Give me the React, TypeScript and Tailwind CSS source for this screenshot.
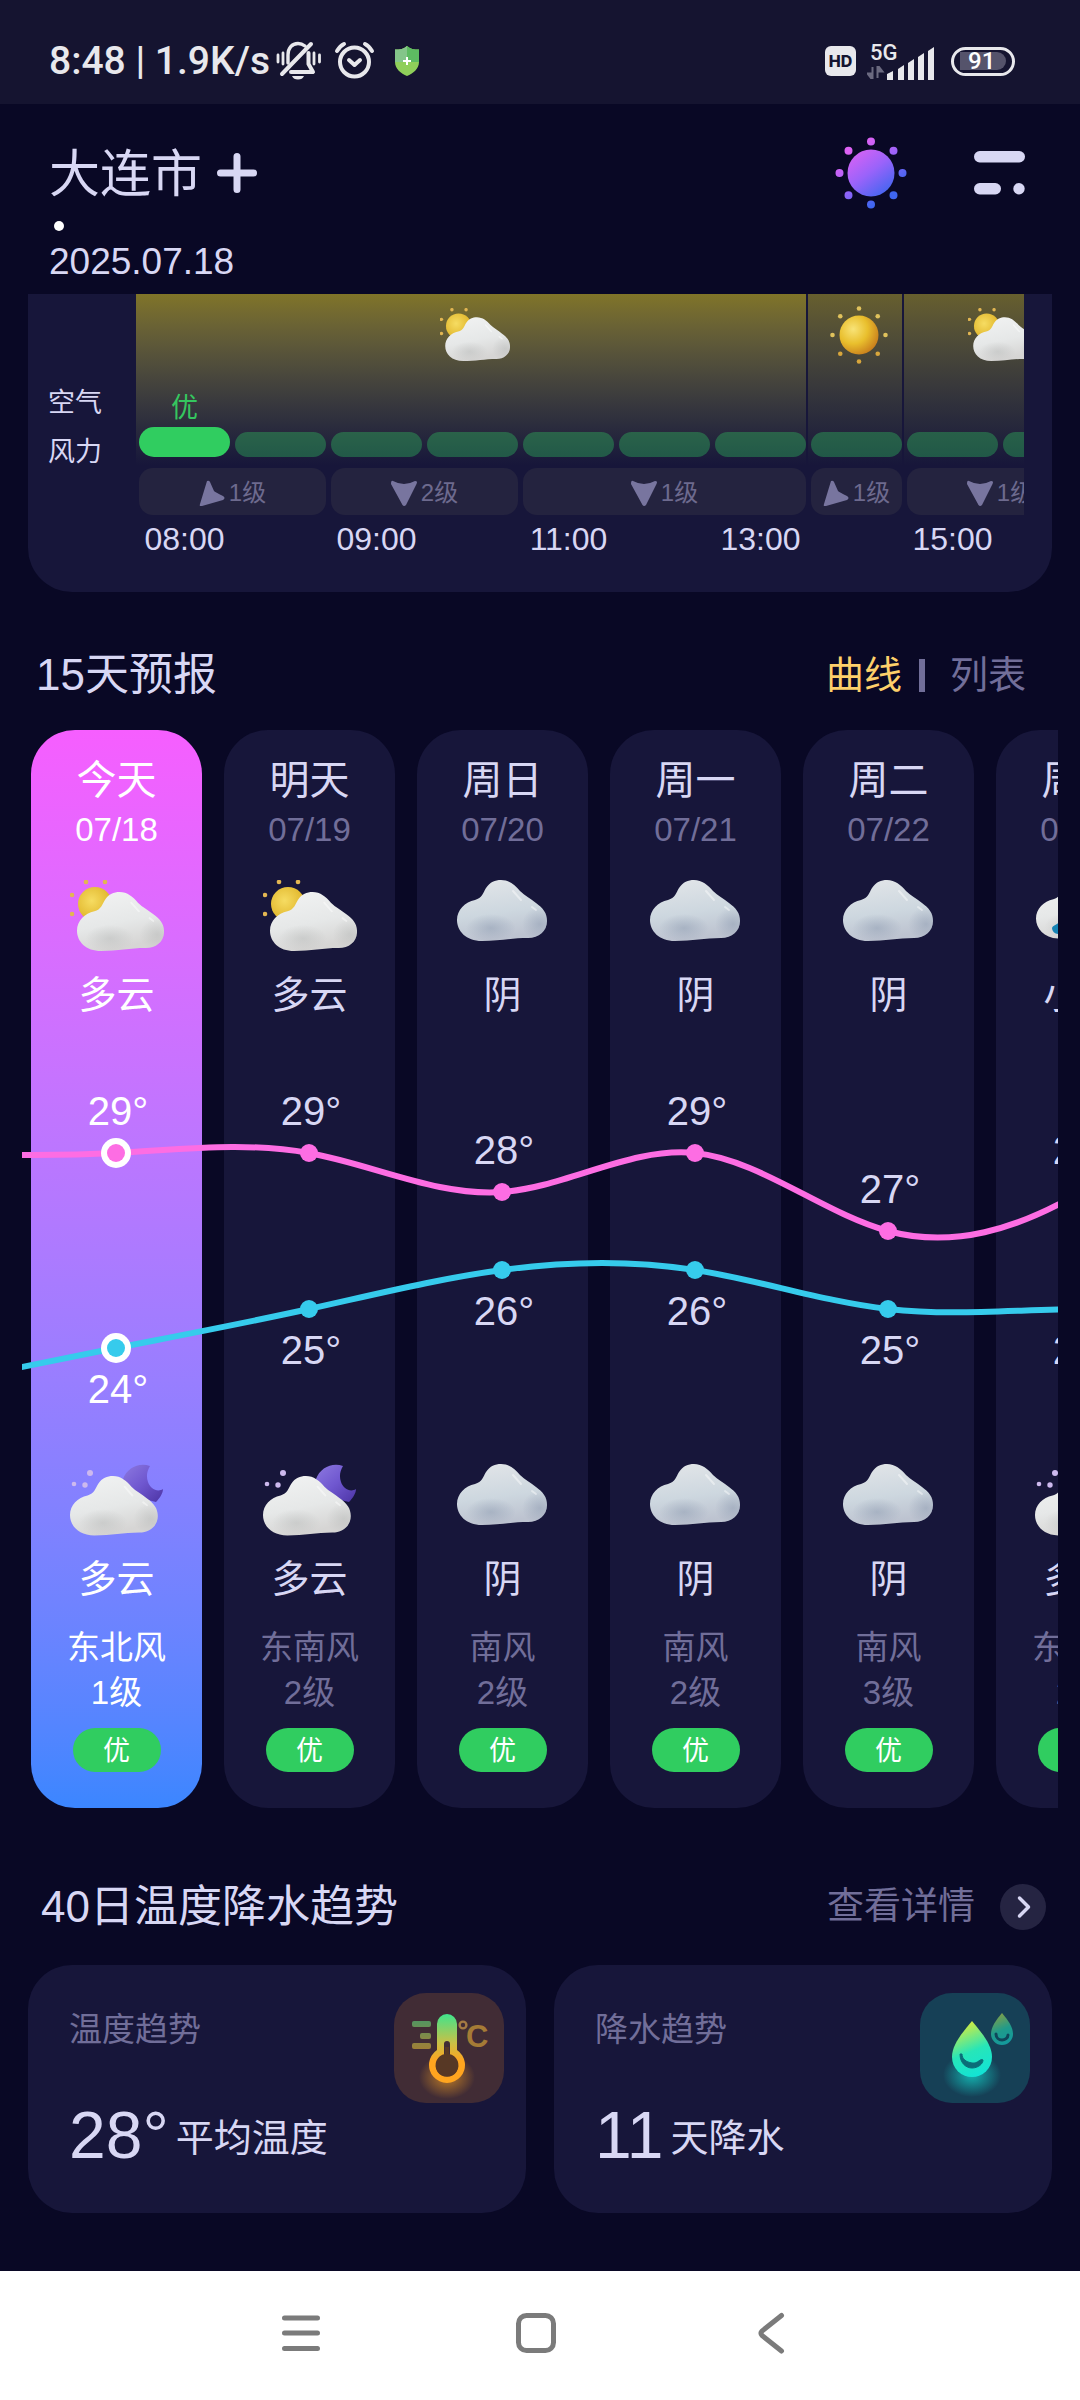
type Sky = "cloudy" | "cloudyNight" | "overcast" | "rain" | "sunny";

const HOUR_WIDTH = 96;
const DAY_WIDTH = 193;
const DEGREE_HEIGHT = 39;

const skySegments: { sky: Sky; hours: number; strong?: boolean; current?: boolean }[] = [
  { sky: "cloudy", hours: 7, strong: true, current: true },
  { sky: "sunny", hours: 1 },
  { sky: "cloudy", hours: 2 },
];

const windSegments = [
  { hours: 2, level: "1级", northEast: true },
  { hours: 2, level: "2级" },
  { hours: 3, level: "1级" },
  { hours: 1, level: "1级", northEast: true },
  { hours: 2, level: "1级" },
];

const hourLabels = ["08:00", "09:00", "11:00", "13:00", "15:00"];

const days: {
  name: string;
  date: string;
  day: Sky;
  dayText: string;
  night: Sky;
  nightText: string;
  high: number;
  low: number;
  wind: string;
  level: string;
}[] = [
  { name: "今天", date: "07/18", day: "cloudy", dayText: "多云", night: "cloudyNight", nightText: "多云", high: 29, low: 24, wind: "东北风", level: "1级" },
  { name: "明天", date: "07/19", day: "cloudy", dayText: "多云", night: "cloudyNight", nightText: "多云", high: 29, low: 25, wind: "东南风", level: "2级" },
  { name: "周日", date: "07/20", day: "overcast", dayText: "阴", night: "overcast", nightText: "阴", high: 28, low: 26, wind: "南风", level: "2级" },
  { name: "周一", date: "07/21", day: "overcast", dayText: "阴", night: "overcast", nightText: "阴", high: 29, low: 26, wind: "南风", level: "2级" },
  { name: "周二", date: "07/22", day: "overcast", dayText: "阴", night: "overcast", nightText: "阴", high: 27, low: 25, wind: "南风", level: "3级" },
  { name: "周三", date: "07/23", day: "rain", dayText: "小雨", night: "cloudyNight", nightText: "多云", high: 28, low: 25, wind: "东南风", level: "2级" },
];

// yesterday first, then the visible days, then two more so the line runs on
const highs = [29, ...days.map((d) => d.high), 31, 31];
const lows = [23, ...days.map((d) => d.low), 25, 26];

const dayX = (i: number) => 94 + i * DAY_WIDTH;
const tempY = (t: number) => 83 + (29 - t) * DEGREE_HEIGHT;

// natural cubic spline through equally spaced temperatures
function splinePath(temps: number[]) {
  const y = temps.map(tempY);
  const n = y.length;
  const slope = y.map(() => 0);
  for (let pass = 0; pass < 30; pass++) {
    slope[0] = (3 * (y[1] - y[0]) - slope[1]) / 2;
    for (let i = 1; i < n - 1; i++) {
      slope[i] = (3 * (y[i + 1] - y[i - 1]) - slope[i - 1] - slope[i + 1]) / 4;
    }
    slope[n - 1] = (3 * (y[n - 1] - y[n - 2]) - slope[n - 2]) / 2;
  }
  const third = DAY_WIDTH / 3;
  let path = `M${dayX(-1)} ${y[0]}`;
  for (let i = 1; i < n; i++) {
    const x0 = dayX(i - 2);
    const x1 = dayX(i - 1);
    path += ` C${x0 + third} ${y[i - 1] + slope[i - 1] / 3} ${x1 - third} ${y[i] - slope[i] / 3} ${x1} ${y[i]}`;
  }
  return path;
}

const CLOUD =
  "M25 61C9 61 0 51 0 40C0 30 8 22 18 20C25 18 26 13 29 8C33 2 38 0 44 0C52 0 58 5 63 11C68 16 73 18 79 23C86 28 90 33 90 41C90 51 82 58 71 58C55 58 42 61 25 61Z";

function SharedDefs() {
  return (
    <svg className="absolute h-0 w-0" aria-hidden="true">
      <defs>
        <linearGradient id="cloudWhite" x1="0" y1="0" x2="0.3" y2="1">
          <stop offset="0" stopColor="#f2f3f3" />
          <stop offset="0.6" stopColor="#e6e8e8" />
          <stop offset="1" stopColor="#d6d5d4" />
        </linearGradient>
        <linearGradient id="cloudGray" x1="0" y1="0" x2="0.2" y2="1">
          <stop offset="0" stopColor="#e3e6e9" />
          <stop offset="0.6" stopColor="#cdd7df" />
          <stop offset="1" stopColor="#bdc3d0" />
        </linearGradient>
        <radialGradient id="shadeWhite">
          <stop offset="0" stopColor="#b0b3b2" stopOpacity="0.4" />
          <stop offset="1" stopColor="#b0b3b2" stopOpacity="0" />
        </radialGradient>
        <radialGradient id="shadeGray">
          <stop offset="0" stopColor="#8c9ab0" stopOpacity="0.5" />
          <stop offset="1" stopColor="#8c9ab0" stopOpacity="0" />
        </radialGradient>
        <radialGradient id="sunBall" cx="0.35" cy="0.35" r="0.75">
          <stop offset="0" stopColor="#f8e377" />
          <stop offset="0.5" stopColor="#e9bf2d" />
          <stop offset="1" stopColor="#c4761a" />
        </radialGradient>
        <radialGradient id="sunSmall" cx="0.4" cy="0.4" r="0.7">
          <stop offset="0" stopColor="#f6dc62" />
          <stop offset="1" stopColor="#dcae20" />
        </radialGradient>
        <linearGradient id="moon" x1="0" y1="0" x2="1" y2="1">
          <stop offset="0" stopColor="#8d79e0" />
          <stop offset="0.5" stopColor="#6f57cf" />
          <stop offset="1" stopColor="#4c34a5" />
        </linearGradient>
        <clipPath id="cloudClip">
          <path d={CLOUD} />
        </clipPath>
      </defs>
    </svg>
  );
}

function Cloud({ gray }: { gray?: boolean }) {
  const shade = gray ? "url(#shadeGray)" : "url(#shadeWhite)";
  return (
    <g>
      <path d={CLOUD} fill={gray ? "url(#cloudGray)" : "url(#cloudWhite)"} />
      <g clipPath="url(#cloudClip)">
        <ellipse cx="34" cy="48" rx="25" ry="14" fill={shade} />
        <ellipse cx="83" cy="44" rx="18" ry="17" fill={shade} />
      </g>
      <path d="M56 11L64 20M75 27L79 30" stroke="#fff" strokeWidth="2" strokeLinecap="round" opacity="0.45" />
    </g>
  );
}

function SkyIcon({ sky, small }: { sky: Sky; small?: boolean }) {
  const size = small ? "h-[54px] w-[70px] shrink-0" : "h-[72px] w-[94px] shrink-0";
  if (sky === "sunny") {
    const rays = [0, 45, 90, 135, 180, 225, 270, 315];
    return (
      <svg className="h-[62px] w-[62px] shrink-0" viewBox="0 0 62 62" aria-label="晴">
        <circle cx="31" cy="31" r="19.500" fill="url(#sunBall)" />
        {rays.map((a) => (
          <circle
            key={a}
            cx={31 + 26.5 * Math.cos((a * Math.PI) / 180)}
            cy={31 + 26.5 * Math.sin((a * Math.PI) / 180)}
            r="2.3"
            fill={a > 0 && a < 180 ? "#d8a63c" : "#e0c25c"}
          />
        ))}
      </svg>
    );
  }
  if (sky === "cloudy") {
    return (
      <svg className={size} viewBox="0 0 94 72" aria-label="多云">
        <circle cx="25" cy="24" r="17" fill="url(#sunSmall)" />
        {[[16, 2], [35, 2], [2, 15], [2, 34]].map(([x, y]) => (
          <circle key={`${x}-${y}`} cx={x} cy={y} r="2.3" fill="#e2b652" />
        ))}
        <g transform="translate(7 12) scale(.967)">
          <Cloud />
        </g>
      </svg>
    );
  }
  if (sky === "cloudyNight") {
    return (
      <svg className={size} viewBox="0 0 94 72" aria-label="多云">
        <path
          d="M80 2C69 -2 57 4 53 15L53 30L86 38C90 34 93 29 93 25C87 29 80 24 78 18C76 12 77 7 80 2Z"
          fill="url(#moon)"
        />
        <circle cx="20" cy="9" r="3" fill="#cdb9ee" />
        <circle cx="4" cy="20" r="2.3" fill="#cdb9ee" />
        <circle cx="15" cy="21" r="2.7" fill="#cdb9ee" />
        <g transform="translate(0 12) scale(.975)">
          <Cloud />
        </g>
      </svg>
    );
  }
  if (sky === "rain") {
    return (
      <svg className={size} viewBox="0 0 94 72" aria-label="小雨">
        <g transform="translate(1 0) scale(.96)">
          <Cloud />
        </g>
        <path
          d="M26 40C28 43 29 45 29 48A5 5 0 0 1 17 48C18 45 23 45 26 40ZM48 50C50 53 52 55 52 58A4 4 0 0 1 44 58C44 55 46 53 48 50ZM68 44C70 47 72 49 72 52A4 4 0 0 1 64 52C64 49 66 47 68 44Z"
          fill="#1683b4"
        />
      </svg>
    );
  }
  return (
    <svg className={size} viewBox="0 0 94 72" aria-label="阴">
      <g transform="translate(1 0)">
        <Cloud gray />
      </g>
    </svg>
  );
}

function StatusBar() {
  return (
    <div className="flex h-[104px] items-center justify-between bg-[#151430] pt-[18px] pr-[65px] pl-[49px] text-[#e8e8ec]">
      <div className="flex items-center">
        <span className="font-['Roboto'] text-[39px] leading-[40px] font-medium whitespace-pre">8:48 | 1.9K/s</span>
        <svg className="ml-[6px] h-[40px] w-[46px]" viewBox="0 0 46 40" fill="none" stroke="currentColor" strokeWidth="3.4" strokeLinecap="round">
          <path d="M12 22V14C12 7 16 2.500 22 2.500C25 2.500 27 3.500 29 5" />
          <path d="M32.500 12V23L37 31H15" strokeLinejoin="round" strokeWidth="4" />
          <path d="M6 33L35 3" strokeWidth="4" />
          <path d="M2 14V21M7 12V23M38 12V23M43.500 14V21" strokeWidth="2.800" />
          <path d="M16 35H28C27 37.500 25 38.500 22 38.500S17 37.500 16 35Z" fill="currentColor" stroke="none" />
        </svg>
        <svg className="ml-[12px] h-[40px] w-[41px]" viewBox="0 0 41 40" fill="none" stroke="currentColor" strokeWidth="4" strokeLinecap="round" strokeLinejoin="round">
          <circle cx="20.500" cy="21" r="14.500" />
          <path d="M15 19L20.500 24L26 19M3 10Q6 5 10 3M38 10Q35 5 31 3" />
        </svg>
        <svg className="ml-[20px] h-[30px] w-[24px]" viewBox="0 0 24 30">
          <path d="M12 0C15 3 19 3.500 24 3.500V16C24 23 18 27.500 12 30C6 27.500 0 23 0 16V3.500C5 3.500 9 3 12 0Z" fill="#8fcf5a" />
          <path d="M12 0C9 3 5 3.500 0 3.500V16H12Z" fill="#84c58a" />
          <path d="M12 0C15 3 19 3.500 24 3.500V16H12Z" fill="#5dbb62" />
          <path d="M12 11V19M8 15H16" stroke="#fff" strokeWidth="2" />
        </svg>
      </div>
      <div className="flex items-center">
        <span className="flex h-[30px] w-[31px] items-center justify-center rounded-[6px] bg-[#e8e8ec] font-['Inter'] text-[16px] font-extrabold text-[#151430]">
          HD
        </span>
        <svg className="mb-[4px] ml-[11px] h-[42px] w-[67px]" viewBox="0 -6 67 42">
          <text x="3" y="16" fontSize="22" fontWeight="500" fontFamily="Roboto, sans-serif" fill="currentColor">5G</text>
          <path d="M5.500 23V34H4L0.500 29.500H5.500M10.500 34V23H12L15.500 27.500H10.500" stroke="#6b6a80" strokeWidth="2" fill="#6b6a80" />
          <path d="M20 30L26 27V36H20ZM31 25L37 21V36H31ZM41 19L47 15V36H41ZM51 13L57 9V36H51ZM61 7L67 3V36H61Z" fill="currentColor" />
        </svg>
        <span className="ml-[17px] flex h-[29px] w-[64px] items-center rounded-full border-3 border-[#e8e8ec] px-[6px]">
          <span className="flex h-[18px] flex-1 items-center rounded-l-[3px] rounded-r-full bg-[#55536b] pl-[8px] font-['Roboto'] text-[24px] leading-none font-medium text-white">
            91
          </span>
        </span>
      </div>
    </div>
  );
}

function Header() {
  return (
    <header className="pr-[54px] pb-[7px] pl-[49px] text-[#d8d7f4]">
      <div className="mt-[31px] flex h-[76px] items-center justify-between">
        <div className="flex items-center">
          <h1 className="pt-[4px] text-[51px] leading-[60px]">大连市</h1>
          <button aria-label="添加城市" className="ml-[14px]">
            <svg className="h-[42px] w-[42px]" viewBox="0 0 42 42" stroke="currentColor" strokeWidth="7" strokeLinecap="round">
              <path d="M21 4.500V37.500M4.500 21H37.500" />
            </svg>
          </button>
        </div>
        <div className="flex items-center">
          <button aria-label="主题">
            <svg className="h-[76px] w-[76px]" viewBox="0 0 76 76">
              <defs>
                <linearGradient id="theme" gradientUnits="userSpaceOnUse" x1="20" y1="14" x2="54" y2="60">
                  <stop offset="0" stopColor="#dd62f4" />
                  <stop offset="0.5" stopColor="#9a63fa" />
                  <stop offset="1" stopColor="#3f66f0" />
                </linearGradient>
              </defs>
              <g fill="url(#theme)">
                <circle cx="38" cy="38" r="23.500" />
                <path d="M34 6.500a4 4 0 1 0 8 0a4 4 0 1 0-8 0ZM34 69.500a4 4 0 1 0 8 0a4 4 0 1 0-8 0ZM2.500 38a4 4 0 1 0 8 0a4 4 0 1 0-8 0ZM65.500 38a4 4 0 1 0 8 0a4 4 0 1 0-8 0ZM11.500 15.700a4 4 0 1 0 8 0a4 4 0 1 0-8 0ZM56.500 15.700a4 4 0 1 0 8 0a4 4 0 1 0-8 0ZM11.500 60.300a4 4 0 1 0 8 0a4 4 0 1 0-8 0ZM56.500 60.300a4 4 0 1 0 8 0a4 4 0 1 0-8 0Z" />
              </g>
            </svg>
          </button>
          <button aria-label="菜单" className="ml-[65px]">
            <svg className="h-[44px] w-[52px]" viewBox="0 0 52 44" fill="currentColor">
              <rect x="0" y="0" width="51" height="11.500" rx="5.700" />
              <rect x="0" y="32" width="27" height="11.500" rx="5.700" />
              <circle cx="45" cy="37.700" r="5.700" />
            </svg>
          </button>
        </div>
      </div>
      <div className="mt-[10px] ml-[5px] h-[10px] w-[10px] rounded-full bg-white" />
      <p className="mt-[6px] text-[37px] leading-[50px]">2025.07.18</p>
    </header>
  );
}

function HourlyCard() {
  return (
    <section className="mx-[28px] flex h-[298px] rounded-b-[44px] bg-[#17163a] pr-[28px] text-[#d8d7f4]">
      <div className="w-[108px] shrink-0 pt-[85px] pl-[20px] text-[27px] leading-[49px]">
        <p>空气</p>
        <p>风力</p>
      </div>
      <div className="min-w-0 flex-1 overflow-hidden">
        <div className="flex h-[171px] gap-[2px]">
          {skySegments.map((seg, i) => (
            <div
              key={i}
              className={`flex shrink-0 flex-col items-center justify-between bg-linear-to-b to-[#17163a] pt-[10px] pb-[8px] pl-[3px] ${seg.strong ? "from-[#807428]" : "from-[#675f2e]"}`}
              style={{ width: seg.hours * HOUR_WIDTH - 2 }}
            >
              <div className="flex h-[62px] items-center pl-[4px]">
                <SkyIcon sky={seg.sky} small />
              </div>
              <div className="flex items-end gap-[5px] self-start">
                {Array.from({ length: seg.hours }, (_, h) =>
                  seg.current && h === 0 ? (
                    <div key={h} className="w-[91px] text-center text-[27px] leading-[38px] text-[#35c75f]">
                      优
                      <div className="h-[30px] rounded-full bg-[#30cd60]" />
                    </div>
                  ) : (
                    <div key={h} className="h-[25px] w-[91px] rounded-full bg-[#30cd60]/35" />
                  ),
                )}
              </div>
            </div>
          ))}
        </div>
        <div className="mt-[3px] ml-[3px] flex gap-[5px]">
          {windSegments.map((seg, i) => (
            <div
              key={i}
              className="flex h-[47px] shrink-0 items-center justify-center gap-[4px] rounded-[14px] bg-[#24233f] pt-[2px] text-[24px] text-[#6d6a8e]"
              style={{ width: seg.hours * HOUR_WIDTH - 5 }}
            >
              <svg className="h-[26px] w-[26px]" viewBox="0 0 26 26" fill="#78759f">
                {seg.northEast ? (
                  <path d="M8 1Q10 0 11 2L15 11Q16 12 24 16Q27 18 24 20L3 26Q0 27 1 24Z" />
                ) : (
                  <path d="M2 1Q13 7 24 1Q27 1 25.500 4L15 25Q13 27 11.500 25L0 4Q0 0 2 1Z" />
                )}
              </svg>
              {seg.level}
            </div>
          ))}
        </div>
        <div className="ml-[3px] flex pt-[4px] text-[32px] leading-[40px]">
          {hourLabels.map((label) => (
            <div key={label} className="w-[192px] shrink-0">
              <p className="w-[91px] text-center">{label}</p>
            </div>
          ))}
        </div>
      </div>
    </section>
  );
}

function TemperatureLine({ temps, color, above }: { temps: number[]; color: string; above?: boolean }) {
  return (
    <g>
      <path d={splinePath(temps)} fill="none" stroke={color} strokeWidth="6" />
      {temps.slice(1, days.length + 1).map((t, i) => (
        <g key={i}>
          {i === 0 && <circle cx={dayX(i)} cy={tempY(t)} r="15" fill="#fff" />}
          <circle cx={dayX(i)} cy={tempY(t)} r="9" fill={color} />
          <text
            x={dayX(i) + 2}
            y={tempY(t) + (above ? -28 : 55)}
            textAnchor="middle"
            fontSize="40"
            fill={i === 0 ? "#fff" : "#d8d7f4"}
          >
            {t}°
          </text>
        </g>
      ))}
    </g>
  );
}

function Forecast() {
  return (
    <section>
      <div className="flex h-[138px] items-center justify-between pt-[28px] pr-[54px] pl-[36px]">
        <h2 className="text-[44px] leading-[60px] text-[#d8d7f4]">15天预报</h2>
        <div className="flex items-center text-[38px] leading-[60px]">
          <button className="text-[#fdd06a]">曲线</button>
          <span className="mr-[25px] ml-[17px] h-[33px] w-[6px] bg-[#716e99]" />
          <button className="text-[#716e99]">列表</button>
        </div>
      </div>
      <div className="mx-[22px] overflow-x-auto [scrollbar-width:none]">
        <div className="relative flex w-max gap-[22px] pl-[9px]">
          {days.map((d, i) => {
            const today = i === 0;
            const main = today ? "text-white" : "text-[#d8d7f4]";
            const dim = today ? "text-white" : "text-[#716e99]";
            return (
              <article
                key={d.date}
                className={`flex w-[171px] flex-col items-center rounded-[44px] pt-[21px] pb-[36px] ${today ? "bg-linear-to-b from-[#f65eff] to-[#3b86ff]" : "bg-[#17163a]"}`}
              >
                <h3 className={`text-[40px] leading-[58px] ${main}`}>{d.name}</h3>
                <p className={`text-[33px] leading-[42px] ${dim}`}>{d.date}</p>
                <div className="mt-[29px]">
                  <SkyIcon sky={d.day} />
                </div>
                <p className={`mt-[13px] text-[38px] leading-[60px] ${main}`}>{d.dayText}</p>
                <div className="h-[439px]" />
                <SkyIcon sky={d.night} />
                <p className={`mt-[13px] text-[38px] leading-[60px] ${main}`}>{d.nightText}</p>
                <p className={`mt-[16px] text-center text-[33px] leading-[45px] ${dim}`}>
                  {d.wind}
                  <br />
                  {d.level}
                </p>
                <span className="mt-[13px] flex h-[44px] w-[88px] items-center justify-center rounded-full bg-[#30cd60] pt-[2px] text-[27px] text-white">
                  优
                </span>
              </article>
            );
          })}
          <svg className="absolute top-[340px] left-0 h-[340px] w-full" aria-label="温度曲线">
            <TemperatureLine temps={highs} color="#fd6de3" above />
            <TemperatureLine temps={lows} color="#36cbec" />
          </svg>
        </div>
      </div>
    </section>
  );
}

function ThermometerIcon() {
  return (
    <svg className="h-[110px] w-[110px] shrink-0" viewBox="0 0 110 110">
      <defs>
        <linearGradient id="heat" gradientUnits="userSpaceOnUse" x1="0" y1="20" x2="0" y2="80">
          <stop offset="0" stopColor="#3be58f" />
          <stop offset="0.5" stopColor="#c9c046" />
          <stop offset="0.8" stopColor="#ffa51f" />
        </linearGradient>
        <radialGradient id="heatGlow">
          <stop offset="0" stopColor="#ffa51f" stopOpacity="0.65" />
          <stop offset="1" stopColor="#ffa51f" stopOpacity="0" />
        </radialGradient>
      </defs>
      <rect width="110" height="110" rx="32" fill="#412c35" />
      <ellipse cx="53" cy="84" rx="28" ry="22" fill="url(#heatGlow)" />
      <path
        fillRule="evenodd"
        fill="url(#heat)"
        d="M43 31A10 10 0 0 1 63 31V57A18 18 0 1 1 43 57ZM50 51V62A11 11 0 1 0 56 62V51A3 3 0 0 0 50 51Z"
      />
      <path d="M51 54V61A11.500 11.500 0 1 0 55 61V54Z" fill="#573825" />
      <g fill="url(#heat)" opacity="0.6">
        <rect x="18" y="28" width="19" height="6" rx="2" />
        <rect x="26" y="40" width="11" height="6" rx="2" />
        <rect x="18" y="50" width="19" height="6" rx="2" />
      </g>
      <circle cx="69" cy="32" r="3.400" fill="none" stroke="#a57b43" strokeWidth="2.400" />
      <text x="72" y="54" fontSize="31" fontWeight="700" fill="#a57b36">C</text>
    </svg>
  );
}

function DropsIcon() {
  return (
    <svg className="h-[110px] w-[110px] shrink-0" viewBox="0 0 110 110">
      <defs>
        <linearGradient id="water" x1="0.3" y1="0" x2="0.6" y2="1">
          <stop offset="0" stopColor="#e2ec35" />
          <stop offset="0.55" stopColor="#27e6b8" />
          <stop offset="1" stopColor="#12e3d6" />
        </linearGradient>
        <radialGradient id="waterGlow">
          <stop offset="0" stopColor="#12e3d6" stopOpacity="0.7" />
          <stop offset="1" stopColor="#12e3d6" stopOpacity="0" />
        </radialGradient>
      </defs>
      <rect width="110" height="110" rx="32" fill="#164056" />
      <ellipse cx="52" cy="82" rx="29" ry="22" fill="url(#waterGlow)" />
      <path d="M52 28C62 40 72 52 72 64A20 20 0 0 1 32 64C32 52 42 40 52 28Z" fill="url(#water)" />
      <path d="M40 61C40 70 46 75 52 75C58 75 63 71 63 67C60 65 58 71 52 70C46 69 42 66 42 61Z" fill="#0b6d78" stroke="#0b6d78" strokeWidth="1" strokeLinejoin="round" />
      <g opacity="0.55">
        <path d="M82 20C88 27 93 34 93 41A11 11 0 0 1 71 41C71 34 76 27 82 20Z" fill="url(#water)" />
        <path d="M76 41C76 45 79 47 82 47C85 47 88 45 88 42" fill="none" stroke="#0b4d5e" strokeWidth="3" strokeLinecap="round" />
      </g>
    </svg>
  );
}

const trends = [
  { label: "温度趋势", value: "28°", unit: "平均温度", Icon: ThermometerIcon },
  { label: "降水趋势", value: "11", unit: "天降水", Icon: DropsIcon },
];

function Trends() {
  return (
    <section className="pb-[58px]">
      <div className="flex h-[157px] items-center justify-between pt-[41px] pr-[34px] pl-[41px]">
        <h2 className="text-[44px] leading-[60px] text-[#d8d7f4]">40日温度降水趋势</h2>
        <a href="#trends" className="flex items-center gap-[25px] text-[37px] leading-[60px] text-[#716e99]">
          查看详情
          <span className="flex h-[46px] w-[46px] items-center justify-center rounded-full bg-[#252442]">
            <svg className="h-[46px] w-[46px]" viewBox="0 0 46 46" fill="none" stroke="#d8d7f4" strokeWidth="3.500" strokeLinecap="round" strokeLinejoin="round">
              <path d="M19.500 14L28.500 23L19.500 32" />
            </svg>
          </span>
        </a>
      </div>
      <div id="trends" className="flex gap-[28px] px-[28px]">
        {trends.map(({ label, value, unit, Icon }) => (
          <article key={label} className="h-[248px] flex-1 rounded-[44px] bg-[#17163a] pt-[28px] pr-[22px] pl-[41px]">
            <div className="flex justify-between">
              <h3 className="pt-[12px] text-[33px] leading-[50px] text-[#716e99]">{label}</h3>
              <Icon />
            </div>
            <p className="flex items-center gap-[7px] text-[#d8d7f4]">
              <span className="text-[66px] leading-[64px]">{value}</span>
              <span className="pt-[6px] text-[38px] leading-[58px]">{unit}</span>
            </p>
          </article>
        ))}
      </div>
    </section>
  );
}

function NavigationBar() {
  return (
    <nav className="flex h-[130px] items-center justify-center gap-[187px] bg-white pr-[8px] pb-[6px]">
      <button aria-label="最近任务">
        <svg className="h-[48px] w-[48px]" viewBox="0 0 48 48" stroke="#7b7b7b" strokeWidth="5" strokeLinecap="round">
          <path d="M7.500 9H40.500M7.500 24H40.500M7.500 39.500H40.500" />
        </svg>
      </button>
      <button aria-label="主屏幕">
        <svg className="h-[48px] w-[48px]" viewBox="0 0 48 48" stroke="#7b7b7b" strokeWidth="5" fill="none">
          <rect x="6.500" y="6.500" width="35" height="35" rx="8" />
        </svg>
      </button>
      <button aria-label="返回">
        <svg className="h-[48px] w-[48px]" viewBox="0 0 48 48" stroke="#7b7b7b" strokeWidth="5" fill="none" strokeLinecap="round">
          <path d="M34.500 6.500L15 22Q13 24 15 26.500L34.500 42" />
        </svg>
      </button>
    </nav>
  );
}

export default function App() {
  return (
    <div lang="zh-CN" className="min-h-screen bg-[#090825] font-['Liberation_Sans','Noto_Sans_CJK_SC',sans-serif]">
      <SharedDefs />
      <StatusBar />
      <Header />
      <HourlyCard />
      <Forecast />
      <Trends />
      <NavigationBar />
    </div>
  );
}
